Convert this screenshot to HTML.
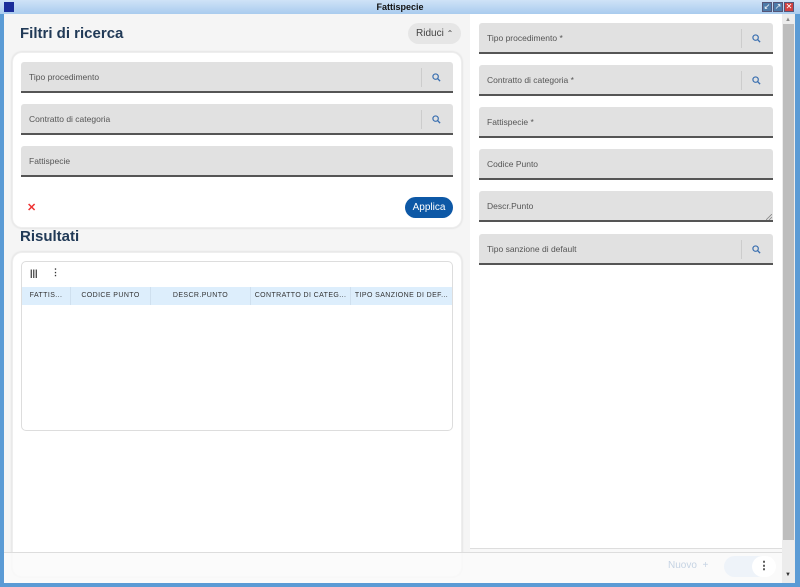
<!DOCTYPE html>
<html><head><meta charset="utf-8"><style>
*{box-sizing:border-box;margin:0;padding:0}
body{width:800px;height:587px;overflow:hidden;font-family:"Liberation Sans",sans-serif;background:#5b9bd5;position:relative}
.title{position:absolute;left:0;top:0;width:800px;height:14px;background:linear-gradient(#cfe3f7,#a9cbee);text-align:center;font-size:9px;font-weight:bold;line-height:14px;color:#111}
.logo{position:absolute;left:4px;top:2px;width:10px;height:10px;background:#1a2d9a}
.wb{position:absolute;top:2px;width:10px;height:10px;border:1px solid #557;font-size:8px;line-height:8px;text-align:center;color:#fff}
.left{position:absolute;left:4px;top:14px;width:466px;height:569px;background:#f5f5f5}
.right{position:absolute;left:470px;top:14px;width:312px;height:569px;background:#f8f8f8}
.rbox{position:absolute;left:470px;top:14px;width:312px;height:535px;background:#fff;border-bottom:1px solid #ddd}
.sb{position:absolute;left:782px;top:14px;width:13px;height:569px;background:#ececec}
.thumb{position:absolute;left:783px;top:24px;width:11px;height:516px;background:#bdbdbd}
h1{position:absolute;font-size:15px;font-weight:bold;color:#213a57}
.card{position:absolute;background:#fff;border-radius:10px;box-shadow:0 0 2px rgba(0,0,0,.15);border:1px solid #eee}
.f{position:absolute;height:31px;background:#e1e1e1;border-bottom:2px solid #555;border-radius:3px 3px 0 0;font-size:8.5px;color:#555;padding-left:8px;line-height:30px}
.f .div{position:absolute;right:31px;top:6px;width:1px;height:19px;background:#ccc}
.f svg{position:absolute;right:12px;top:11px}
.th{position:absolute;top:287px;height:18px;background:#ddeefc;font-size:7px;color:#333;text-align:center;line-height:18px;letter-spacing:.4px;border-right:1px solid #cfe0ef}
</style></head><body>
<div class="title">Fattispecie</div>
<div class="logo"></div>
<div class="wb" style="left:762px;background:#4d7aa8">↙</div>
<div class="wb" style="left:773px;background:#4d7aa8">↗</div>
<div class="wb" style="left:784px;background:#d04040">✕</div>
<div class="left"></div>
<div class="right"></div>
<div class="rbox"></div>
<div class="sb"></div><div class="thumb"></div>
<div style="position:absolute;left:785px;top:17px;font-size:6px;color:#888">▲</div>
<div style="position:absolute;left:785px;top:572px;font-size:6px;color:#333">▼</div>

<h1 style="left:20px;top:25px">Filtri di ricerca</h1>
<div style="position:absolute;left:408px;top:23px;width:53px;height:21px;border-radius:11px;background:#e6e6e6;font-size:10px;color:#444;line-height:21px;padding-left:8px">Riduci <span style="font-size:8px">⌃</span></div>

<div class="card" style="left:12px;top:52px;width:450px;height:176px"></div>
<div class="f" style="left:21px;top:62px;width:432px">Tipo procedimento<div class="div"></div><svg width="9" height="9" viewBox="0 0 10 10"><circle cx="4" cy="4" r="3" fill="none" stroke="#3a6fb0" stroke-width="1.3"/><path d="M6.2 6.2L9 9" stroke="#3a6fb0" stroke-width="1.5"/></svg></div>
<div class="f" style="left:21px;top:104px;width:432px">Contratto di categoria<div class="div"></div><svg width="9" height="9" viewBox="0 0 10 10"><circle cx="4" cy="4" r="3" fill="none" stroke="#3a6fb0" stroke-width="1.3"/><path d="M6.2 6.2L9 9" stroke="#3a6fb0" stroke-width="1.5"/></svg></div>
<div class="f" style="left:21px;top:146px;width:432px">Fattispecie</div>
<div style="position:absolute;left:27px;top:201px;color:#e33;font-size:11px;font-weight:bold">✕</div>
<div style="position:absolute;left:405px;top:197px;width:48px;height:21px;border-radius:11px;background:#0d58a6;color:#fff;font-size:10px;text-align:center;line-height:21px">Applica</div>

<h1 style="left:20px;top:228px">Risultati</h1>
<div class="card" style="left:12px;top:252px;width:450px;height:325px"></div>
<div style="position:absolute;left:21px;top:261px;width:432px;height:170px;border:1px solid #ddd;border-radius:5px;background:#fff"></div>
<div style="position:absolute;left:30px;top:268px;font-size:9px;font-weight:bold;color:#333">|||</div>
<div style="position:absolute;left:51px;top:267px;font-size:9px;font-weight:bold;color:#333">⋮</div>
<div class="th" style="left:22px;width:49px">FATTIS...</div>
<div class="th" style="left:71px;width:80px">CODICE PUNTO</div>
<div class="th" style="left:151px;width:100px">DESCR.PUNTO</div>
<div class="th" style="left:251px;width:100px">CONTRATTO DI CATEG...</div>
<div class="th" style="left:351px;width:101px;border-right:none">TIPO SANZIONE DI DEF...</div>

<div class="f" style="left:479px;top:23px;width:294px">Tipo procedimento *<div class="div"></div><svg width="9" height="9" viewBox="0 0 10 10"><circle cx="4" cy="4" r="3" fill="none" stroke="#3a6fb0" stroke-width="1.3"/><path d="M6.2 6.2L9 9" stroke="#3a6fb0" stroke-width="1.5"/></svg></div>
<div class="f" style="left:479px;top:65px;width:294px">Contratto di categoria *<div class="div"></div><svg width="9" height="9" viewBox="0 0 10 10"><circle cx="4" cy="4" r="3" fill="none" stroke="#3a6fb0" stroke-width="1.3"/><path d="M6.2 6.2L9 9" stroke="#3a6fb0" stroke-width="1.5"/></svg></div>
<div class="f" style="left:479px;top:107px;width:294px">Fattispecie *</div>
<div class="f" style="left:479px;top:149px;width:294px">Codice Punto</div>
<div class="f" style="left:479px;top:191px;width:294px">Descr.Punto<svg width="6" height="6" viewBox="0 0 6 6" style="right:1px;top:23px"><path d="M0 6L6 0M3 6L6 3" stroke="#888" stroke-width=".8"/></svg></div>
<div class="f" style="left:479px;top:234px;width:294px">Tipo sanzione di default<div class="div"></div><svg width="9" height="9" viewBox="0 0 10 10"><circle cx="4" cy="4" r="3" fill="none" stroke="#3a6fb0" stroke-width="1.3"/><path d="M6.2 6.2L9 9" stroke="#3a6fb0" stroke-width="1.5"/></svg></div>

<div style="position:absolute;left:4px;top:552px;width:778px;height:31px;background:rgba(250,250,250,.85);border-top:1px solid #ddd"></div>
<div style="position:absolute;left:668px;top:560px;font-size:10px;color:#c5d3e3">Nuovo &nbsp;+</div>
<div style="position:absolute;left:724px;top:556px;width:50px;height:21px;border-radius:11px;background:#eef3f9"></div>
<div style="position:absolute;left:752px;top:556px;width:24px;height:21px;border-radius:11px;background:#fff;text-align:center;font-size:11px;line-height:21px;color:#333;font-weight:bold">⋮</div>
</body></html>
